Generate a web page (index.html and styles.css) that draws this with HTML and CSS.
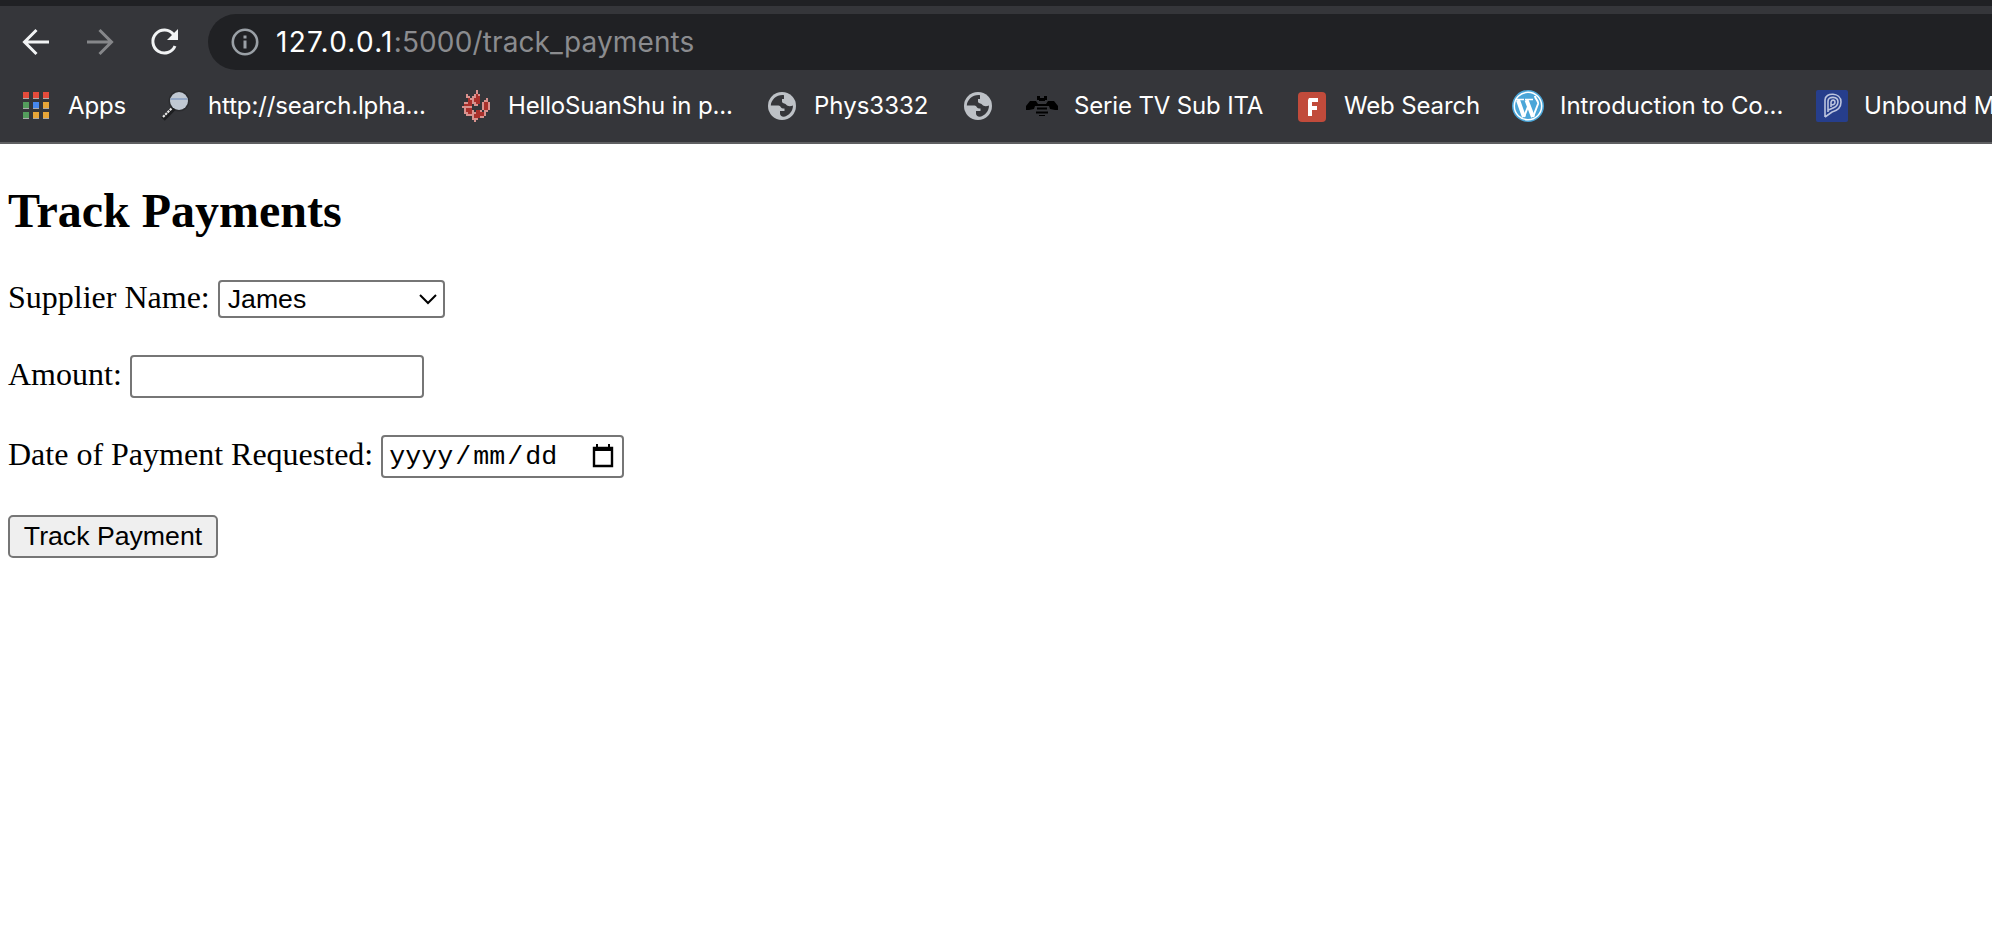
FILE: index.html
```html
<!DOCTYPE html>
<html lang="en">
<head>
<meta charset="utf-8">
<title>Track Payments</title>
<link rel="stylesheet" href="styles.css">
</head>
<body>
<svg class="defs" width="0" height="0">
  <symbol id="globe" viewBox="0 0 32 32">
    <circle cx="16" cy="16" r="14" fill="#bdc1c6"/>
    <path d="M18 5.2C11 4.400 5.200 9.500 4.800 15.500H12.500C15 15.500 14.500 18.500 17 18.500H18.500V21H14V23.500C14 25.500 15.500 26.800 18 26.700C23 25.800 27 21 27 15.500C24.500 16.500 21.500 16.500 20 14.500C19 13 16 13.500 16 11.500V9H18Z" fill="#35363a"/>
  </symbol>
</svg>
<header class="browser">
  <div class="toolbar">
    <svg class="nav back" viewBox="0 0 32 32"><path d="M29 16H5M16.500 4L4.500 16L16.500 28" fill="none" stroke="#f1f3f4" stroke-width="3"/></svg>
    <svg class="nav forward" viewBox="0 0 32 32"><path d="M3 16H27M15.500 4L27.500 16L15.500 28" fill="none" stroke="#86878a" stroke-width="3"/></svg>
    <svg class="nav reload" viewBox="0 0 32 32"><path d="M25.500 8.500A11.500 11.500 0 1 0 27 20" fill="none" stroke="#f1f3f4" stroke-width="3"/><path d="M30 3V14H19Z" fill="#f1f3f4"/></svg>
    <div class="omnibox">
      <svg class="info" viewBox="0 0 28 28"><circle cx="14" cy="14" r="12.200" fill="none" stroke="#9aa0a6" stroke-width="2.600"/><path d="M12.500 7.500H15.500V10.500H12.500ZM12.500 12.500H15.500V20.500H12.500Z" fill="#9aa0a6"/></svg>
      <span class="url"><span class="host">127.0.0.1</span><span class="path">:5000/track_payments</span></span>
    </div>
  </div>
  <nav class="bookmarks">
    <a class="mark apps"><svg viewBox="0 2 32 32"><g fill="#aaa"><path d="M3 4h6v7H3zM13 4h6v7h-6zM23 4h6v7h-6zM3 14h6v7H3zM13 14h6v7h-6zM23 14h6v7h-6zM3 24h6v7H3zM13 24h6v7h-6zM23 24h6v7h-6z"/></g><path d="M3 4h6v6H3zM13 4h6v6h-6zM23 4h6v6h-6z" fill="#e44b3c"/><path d="M3 14h6v6H3zM3 24h6v6H3z" fill="#549d5c"/><path d="M13 14h6v6h-6z" fill="#4688ef"/><path d="M23 14h6v6h-6zM13 24h6v6h-6zM23 24h6v6h-6z" fill="#e8a638"/></svg><span>Apps</span></a>
    <a class="mark search"><svg viewBox="0 0 32 32"><circle cx="19" cy="11" r="10.500" fill="#2b2c2f"/><path d="M3 29L14 18" stroke="#1d1e20" stroke-width="5"/><path d="M3 27L12 18" stroke="#e6e6e6" stroke-width="2.200" stroke-dasharray="2.400 .8"/><circle cx="19" cy="11" r="9" fill="#c0c8d2"/><path d="M10.500 9H27.500" stroke="#93a7c5" stroke-width="2"/></svg><span>http://search.lpha...</span></a>
    <a class="mark hello"><svg viewBox="0 0 32 32" shape-rendering="crispEdges"><path d="M16 0h2v4h2v10h-2v2h-4v-2h-2V6h2V4h2zM6 4h2v2h2v2h2v8h-2v2H8v-2H6v-4h2V8H6zM26 8h2v4h2v8h-2v2h-4v-2h-2v-8h2v-2h2zM4 12h4v4h4v4h2v4h-2v2H6v-2H4v-6H2v-2h2zM16 20h6v2h4v4h-2v2h-6v2h-2v2h-2v-2h-2v-6h2v-2h2z" fill="#d9928e"/><path d="M16 4h2v2h2v8h-4v-2h-2V8h2zM8 8h2v2h2v6H8zM24 12h4v8h-4zM4 14h4v2H4zM6 18h6v6H8v-2H6zM16 20h4v2h4v4h-4v2h-6v-4h2z" fill="#a9302b"/></svg><span>HelloSuanShu in p...</span></a>
    <a class="mark phys"><svg><use href="#globe"/></svg><span>Phys3332</span></a>
    <a class="mark blank"><svg><use href="#globe"/></svg></a>
    <a class="mark serie"><svg viewBox="0 0 32 32"><path d="M11 6h3v2h4V6h3v4h-2v1h-6v-1h-2zM4 11h6l2 3h8l2-3h6l4 5v4h-3l-5-1-1-3H9l-1 3-5 1H0v-4zM11 17.500h10v2H11zM10 21.500h12v2H10zM13 25h6v1h-6z" fill="#000"/></svg><span>Serie TV Sub ITA</span></a>
    <a class="mark web"><svg viewBox="0 0 32 32"><rect x="2" y="2" width="28" height="30" rx="4" fill="#c14b3b"/><path d="M13 8H22V12H16V16H21V20H16V26H12V10Z" fill="#fff"/></svg><span>Web Search</span></a>
    <a class="mark intro"><svg viewBox="0 0 32 32"><circle cx="16" cy="16" r="16" fill="#4ba6d8"/><circle cx="16" cy="16" r="13.700" fill="none" stroke="#fff" stroke-width="1.500"/><path d="M3.500 9.500H12M13 9.500H21" stroke="#fff" stroke-width="1.500"/><path d="M6 10L12 27M14.500 10L21 27" stroke="#fff" stroke-width="4"/><path d="M12 27L17 14M21 27L26 14C27 11 23 9 23 6" stroke="#fff" stroke-width="2" fill="none"/></svg><span>Introduction to Co...</span></a>
    <a class="mark unbound"><svg viewBox="0 0 32 32"><rect width="32" height="32" rx="2" fill="#263e8c"/><path d="M9 27V10C9 2 25 2 25 12C25 18 20 21 16 22L9 27M12 22V11C12 6 22 6 22 12C22 17 17 18 12 20M15 17V12C16 9 19 10 19 12C19 14 17 15 15 15" fill="none" stroke="#bcc5df" stroke-width="1.600"/></svg><span>Unbound M</span></a>
  </nav>
</header>
<main>
  <h2>Track Payments</h2>
  <form>
    <div class="row first"><label>Supplier Name:</label>
      <div class="select"><span>James</span><svg viewBox="0 0 18 11"><path d="M1 1L9 9L17 1" fill="none" stroke="#000" stroke-width="2"/></svg></div></div>
    <div class="row"><label for="amount">Amount:</label><input class="amount" id="amount"></div>
    <div class="row"><label>Date of Payment Requested:</label>
      <div class="date"><span>yyyy</span><span class="slash">/</span><span>mm</span><span class="slash">/</span><span>dd</span><svg viewBox="0 0 22 24"><path d="M2 4H20V22H2Z" fill="none" stroke="#000" stroke-width="2.400"/><path d="M1 3H21V7H1ZM4 0H6V4H4ZM16 0H18V4H16Z"/></svg></div></div>
    <button type="button">Track Payment</button>
  </form>
</main>
</body>
</html>
```
FILE: styles.css
```css
* { box-sizing: border-box; }
body { margin: 0; background: #fff; color: #000; font-family: "Liberation Serif", serif; overflow: hidden; }
.defs { position: absolute; }
.browser { height: 144px; border-top: 6px solid #202124; border-bottom: 2px solid #5f6062; background: #35363a; font-family: Inter, sans-serif; overflow: hidden; }
.toolbar { display: flex; height: 64px; padding: 8px 0 0 20px; align-items: center; }
.nav { width: 32px; height: 32px; margin-right: 32px; flex: none; }
.nav.reload { margin-right: 28px; }
.omnibox { flex: 1; height: 56px; background: #202124; border-radius: 28px 0 0 28px; display: flex; align-items: center; padding-left: 23px; }
.info { width: 28px; height: 28px; margin-right: 17px; }
.url { font-size: 28px; line-height: 34px; white-space: nowrap; }
.host { color: #fff; letter-spacing: 1.25px; }
.path { color: #8b8c8f; letter-spacing: 0.13px; }
.bookmarks { display: flex; height: 72px; padding-left: 20px; align-items: center; }
.mark { display: flex; flex: none; align-items: center; gap: 16px; color: #fff; font-size: 24px; line-height: 30px; letter-spacing: -0.15px; white-space: nowrap; }
.mark svg { width: 32px; height: 32px; flex: none; }
.apps { width: 140px; }
.search { width: 300px; }
.hello { width: 306px; }
.phys { width: 196px; letter-spacing: 0; }
.blank { width: 64px; }
.serie { width: 270px; }
.web { width: 216px; }
.intro { width: 304px; letter-spacing: -0.06px; }
main { padding: 40px 8px 0; }
h2 { margin: 0 0 41px; font-size: 48px; line-height: 54px; }
.row { display: flex; gap: 8px; height: 43px; margin-bottom: 37px; font-size: 32px; line-height: 36px; }
.row label { padding-top: 1px; }
.row.first { height: 39px; }
.row.first label { padding-top: 0; }
.select, .date, .amount { border: 2px solid #767676; border-radius: 4px; background: #fff; display: flex; align-items: center; }
.select { width: 227px; height: 38px; margin-top: 1px; padding: 0 6px 0 8px; justify-content: space-between; font: 26.67px/32px "Liberation Sans", sans-serif; }
.select svg { width: 18px; height: 11px; }
.amount { width: 294px; height: 43px; padding: 2px; }
.date { width: 243px; height: 43px; padding: 2px 8px 2px 6px; font: 26.67px/32px "Liberation Mono", monospace; }
.slash { width: 20px; text-align: center; }
.date svg { width: 22px; height: 24px; margin: 0 0 2px auto; }
button { display: block; width: 210px; height: 43px; padding: 0 0 2px; border: 2px solid #767676; border-radius: 5px; background: #efefef; color: #000; font: 26.67px/32px "Liberation Sans", sans-serif; }
```
